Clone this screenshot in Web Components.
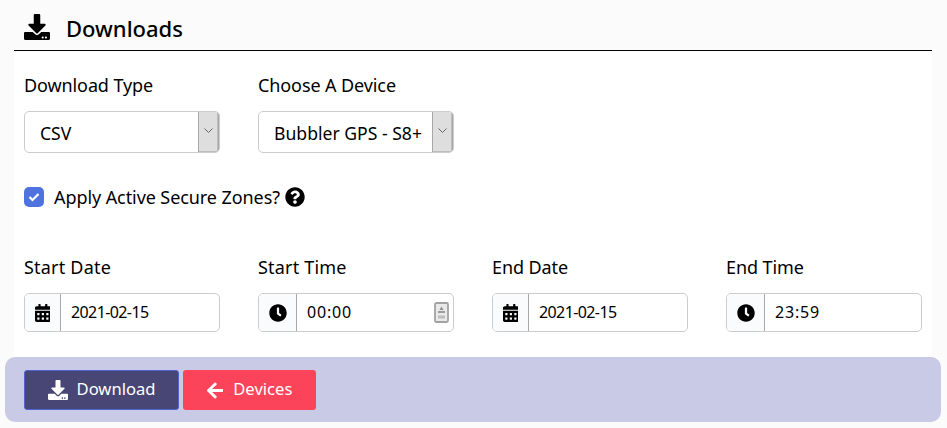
<!DOCTYPE html>
<html lang="en">
<head>
<meta charset="utf-8">
<title>Downloads</title>
<style>
  html, body { margin: 0; padding: 0; background: #fbfbfb; }
  body { font-family: "Noto Sans", sans-serif; color: #000; }
</style>
</head>
<body>
<downloads-page></downloads-page>

<script>
const ICONS = {
    download: ['0 0 512 512', 'M216 0h80c13.3 0 24 10.7 24 24v168h87.7c17.8 0 26.7 21.5 14.1 34.1L269.7 378.3c-7.5 7.5-19.8 7.5-27.3 0L90.1 226.1c-12.6-12.6-3.7-34.1 14.1-34.1H192V24c0-13.3 10.7-24 24-24zm296 376v112c0 13.3-10.7 24-24 24H24c-13.3 0-24-10.7-24-24V376c0-13.3 10.7-24 24-24h146.7l49 49c20.1 20.1 52.5 20.1 72.6 0l49-49H488c13.3 0 24 10.7 24 24zm-124 88c0-11-9-20-20-20s-20 9-20 20 9 20 20 20 20-9 20-20zm64 0c0-11-9-20-20-20s-20 9-20 20 9 20 20 20 20-9 20-20z'],
    calendar: ['0 0 448 512', 'M0 464c0 26.5 21.5 48 48 48h352c26.5 0 48-21.5 48-48V192H0v272zm320-196c0-6.6 5.4-12 12-12h40c6.6 0 12 5.4 12 12v40c0 6.6-5.4 12-12 12h-40c-6.6 0-12-5.4-12-12v-40zm0 128c0-6.6 5.4-12 12-12h40c6.6 0 12 5.4 12 12v40c0 6.6-5.4 12-12 12h-40c-6.6 0-12-5.4-12-12v-40zM192 268c0-6.6 5.4-12 12-12h40c6.6 0 12 5.4 12 12v40c0 6.6-5.4 12-12 12h-40c-6.6 0-12-5.4-12-12v-40zm0 128c0-6.6 5.4-12 12-12h40c6.6 0 12 5.4 12 12v40c0 6.6-5.4 12-12 12h-40c-6.6 0-12-5.4-12-12v-40zM64 268c0-6.6 5.4-12 12-12h40c6.6 0 12 5.4 12 12v40c0 6.6-5.4 12-12 12H76c-6.6 0-12-5.4-12-12v-40zm0 128c0-6.6 5.4-12 12-12h40c6.6 0 12 5.4 12 12v40c0 6.6-5.4 12-12 12H76c-6.6 0-12-5.4-12-12v-40zM400 64h-48V16c0-8.8-7.2-16-16-16h-32c-8.8 0-16 7.2-16 16v48H160V16c0-8.8-7.2-16-16-16h-32c-8.8 0-16 7.2-16 16v48H48C21.5 64 0 85.5 0 112v48h448v-48c0-26.5-21.5-48-48-48z'],
    clock: ['0 0 512 512', 'M256,8C119,8,8,119,8,256S119,504,256,504,504,393,504,256,393,8,256,8Zm92.49,313h0l-20,25a16,16,0,0,1-22.49,2.5h0l-67-49.72a40,40,0,0,1-15-31.23V112a16,16,0,0,1,16-16h32a16,16,0,0,1,16,16V256l58,42.5A16,16,0,0,1,348.49,321Z'],
    question: ['0 0 512 512', 'M504 256c0 136.997-111.043 248-248 248S8 392.997 8 256C8 119.083 119.043 8 256 8s248 111.083 248 248zM262.655 90c-54.497 0-89.255 22.957-116.549 63.758-3.536 5.286-2.353 12.415 2.715 16.258l34.699 26.31c5.205 3.947 12.621 3.008 16.665-2.122 17.864-22.658 30.113-35.797 57.303-35.797 20.429 0 45.698 13.148 45.698 32.958 0 14.976-12.363 22.667-32.534 33.976C247.128 238.528 216 254.941 216 296v4c0 6.627 5.373 12 12 12h56c6.627 0 12-5.373 12-12v-1.333c0-28.462 83.186-29.647 83.186-106.667 0-58.002-60.165-102-116.531-102zM256 338c-25.365 0-46 20.635-46 46 0 25.364 20.635 46 46 46s46-20.636 46-46c0-25.365-20.635-46-46-46z'],
    arrow: ['0 0 448 512', 'M257.5 445.1l-22.2 22.2c-9.4 9.4-24.6 9.4-33.9 0L7 273c-9.4-9.4-9.4-24.6 0-33.9L201.4 44.7c9.4-9.4 24.6-9.4 33.9 0l22.2 22.2c9.5 9.5 9.3 25-.4 34.3L136.6 216H424c13.3 0 24 10.7 24 24v32c0 13.3-10.7 24-24 24H136.6l120.5 114.8c9.8 9.3 10 24.8.4 34.3z']
};

class FaIcon extends HTMLElement {
    connectedCallback() {
        const [box, d] = ICONS[this.getAttribute('name')];
        this.attachShadow({ mode: 'open' });
        this.shadowRoot.innerHTML = `
            <style>
                :host { display: inline-flex; height: var(--icon-size, 16px); }
                svg { height: 100%; display: block; fill: currentColor; }
            </style>
            <svg viewBox="${box}"><path d="${d}"/></svg>
        `;
    }
}

class SelectField extends HTMLElement {
    connectedCallback() {
        this.attachShadow({ mode: 'open' });
        this.shadowRoot.innerHTML = `
            <style>
                :host { display: block; }
                label { display: block; font-size: 18px; line-height: 24px; margin-bottom: 14px; letter-spacing: var(--label-spacing, 0); }
                .box {
                    display: flex;
                    height: 42px;
                    box-sizing: border-box;
                    border: 1px solid #cccccc;
                    border-radius: 5px;
                    background: #fff;
                    overflow: hidden;
                }
                .value { flex: 1; padding-left: 15px; font-size: 17.6px; line-height: 42px; white-space: nowrap; }
                .arrow {
                    width: 21px;
                    background: #dedede;
                    border: 1px solid #a8a8a8;
                    border-width: 0 1px 0 1px;
                    box-shadow: inset -1px -1px 0 #bdbdbd;
                    display: flex;
                    align-items: flex-start;
                    justify-content: center;
                    padding-top: 16px;
                    box-sizing: border-box;
                }
                svg { display: block; }
            </style>
            <label>${this.getAttribute('label')}</label>
            <div class="box">
                <div class="value"><slot></slot></div>
                <div class="arrow"><svg width="9" height="5" viewBox="0 0 9 5"><path d="M.5.5l4 4 4-4" fill="none" stroke="#666" stroke-width="1"/></svg></div>
            </div>
        `;
    }
}

class InputField extends HTMLElement {
    connectedCallback() {
        const spinner = this.hasAttribute('spinner') ? `
            <svg class="spin" width="15" height="21" viewBox="0 0 15 21">
                <rect x="1" y="1" width="13" height="19" rx="1.5" fill="#e9e9e9" stroke="#a2a2a2" stroke-width="1.8"/>
                <path d="M7.5 4.5l2 3.5h-4z" fill="#8f8f8f"/>
                <rect x="4" y="9" width="7" height="2" fill="#9c9c9c"/>
                <rect x="4" y="13.5" width="7" height="3" fill="#bdbdbd"/>
            </svg>` : '';
        this.attachShadow({ mode: 'open' });
        this.shadowRoot.innerHTML = `
            <style>
                :host { display: block; }
                label { display: block; font-size: 18px; line-height: 24px; margin-bottom: 14px; letter-spacing: var(--label-spacing, 0); }
                .box {
                    display: flex;
                    align-items: stretch;
                    height: 39px;
                    box-sizing: border-box;
                    border: 1px solid #cccccc;
                    border-radius: 5px;
                    background: #fff;
                    overflow: hidden;
                }
                .addon {
                    width: var(--addon-width, 35px);
                    background: #fafbfd;
                    border-right: 1px solid #a9a9a9;
                    display: flex;
                    align-items: center;
                    justify-content: center;
                    --icon-size: 18px;
                }
                .value { flex: 1; padding-left: 10px; font-size: 16px; line-height: 36px; letter-spacing: var(--value-spacing, 0); }
                .spin { align-self: center; margin-right: 4px; }
            </style>
            <label>${this.getAttribute('label')}</label>
            <div class="box">
                <div class="addon"><fa-icon name="${this.getAttribute('icon')}"></fa-icon></div>
                <div class="value"><slot></slot></div>
                ${spinner}
            </div>
        `;
    }
}

class CheckField extends HTMLElement {
    connectedCallback() {
        this.attachShadow({ mode: 'open' });
        this.shadowRoot.innerHTML = `
            <style>
                :host { display: flex; align-items: center; height: 24px; font-size: 18px; letter-spacing: -0.08px; }
                .tick {
                    width: 20px; height: 20px;
                    border-radius: 5px;
                    background: #4e73df;
                    display: flex; align-items: center; justify-content: center;
                    margin-right: 10px;
                }
                .help { margin-left: 5px; --icon-size: 20px; }
            </style>
            <span class="tick">
                <svg width="12" height="10" viewBox="0 0 12 10"><path d="M1.5 5l3 3 6-6" fill="none" stroke="#fff" stroke-width="2.2"/></svg>
            </span>
            <span><slot></slot></span>
            <fa-icon class="help" name="question"></fa-icon>
        `;
    }
}

class ActionButton extends HTMLElement {
    connectedCallback() {
        this.attachShadow({ mode: 'open' });
        this.shadowRoot.innerHTML = `
            <style>
                :host {
                    display: inline-flex;
                    align-items: center;
                    justify-content: center;
                    box-sizing: border-box;
                    height: 40px;
                    border-radius: 3px;
                    color: #fff;
                    font-size: 16.6px;
                    gap: 9px;
                    --icon-size: 20px;
                }
                :host([kind="primary"]) { width: 155px; background: #484675; border: 1px solid #4e63d0; }
                :host([kind="danger"]) { width: 133px; background: #fb4459; --icon-size: 19px; gap: 10px; }
                span { margin-top: -3px; }
            </style>
            <fa-icon name="${this.getAttribute('icon')}"></fa-icon>
            <span><slot></slot></span>
        `;
    }
}

class DownloadsPage extends HTMLElement {
    connectedCallback() {
        this.attachShadow({ mode: 'open' });
        this.shadowRoot.innerHTML = `
            <style>
                :host { display: block; width: 947px; height: 428px; overflow: hidden; }
                header {
                    margin: 0 15px 0 14px;
                    height: 51px;
                    box-sizing: border-box;
                    border-bottom: 1px solid #000;
                    display: flex;
                    align-items: center;
                    padding: 6px 0 0 10px;
                    --icon-size: 26px;
                }
                header fa-icon { margin-top: -2px; }
                h1 { margin: 0 0 0 16px; font-size: 22px; font-weight: 500; line-height: 30px; }
                main {
                    margin: 0 15px 0 14px;
                    height: 306px;
                    box-sizing: border-box;
                    background: #fff;
                    padding: 22px 10px 0;
                }
                .row { display: grid; grid-template-columns: repeat(4, 196px); column-gap: 38px; }
                .tight { --label-spacing: -0.1px; }
                .start { --label-spacing: 0.2px; }
                .end { --label-spacing: -0.1px; }
                .date { --value-spacing: -0.6px; }
                .time { --value-spacing: 0.8px; --addon-width: 37px; }
                check-field { margin-top: 32px; }
                .dates { margin-top: 46px; }
                footer {
                    margin: 0 6px 0 5px;
                    height: 65px;
                    box-sizing: border-box;
                    background: #c9cae6;
                    border-radius: 10px;
                    padding: 13px 19px;
                    display: flex;
                    gap: 4px;
                }
            </style>
            <header>
                <fa-icon name="download"></fa-icon>
                <h1>Downloads</h1>
            </header>
            <main>
                <div class="row tight">
                    <select-field label="Download Type">CSV</select-field>
                    <select-field label="Choose A Device">Bubbler GPS - S8+</select-field>
                </div>
                <check-field>Apply Active Secure Zones?</check-field>
                <div class="row dates">
                    <input-field class="date start" label="Start Date" icon="calendar">2021-02-15</input-field>
                    <input-field class="time start" label="Start Time" icon="clock" spinner>00:00</input-field>
                    <input-field class="date end" label="End Date" icon="calendar">2021-02-15</input-field>
                    <input-field class="time end" label="End Time" icon="clock">23:59</input-field>
                </div>
            </main>
            <footer>
                <action-button kind="primary" icon="download">Download</action-button>
                <action-button kind="danger" icon="arrow">Devices</action-button>
            </footer>
        `;
    }
}

customElements.define('fa-icon', FaIcon);
customElements.define('select-field', SelectField);
customElements.define('input-field', InputField);
customElements.define('check-field', CheckField);
customElements.define('action-button', ActionButton);
customElements.define('downloads-page', DownloadsPage);
</script>
</body>
</html>
